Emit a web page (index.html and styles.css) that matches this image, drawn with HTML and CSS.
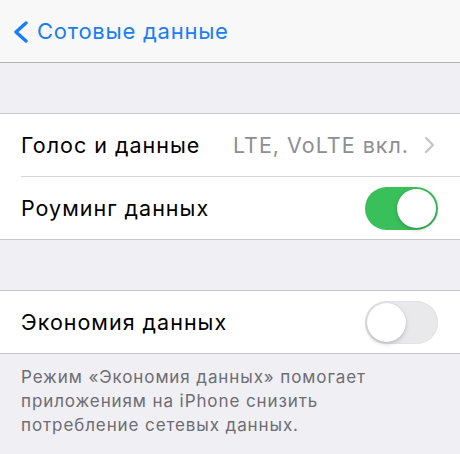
FILE: index.html
```html
<!DOCTYPE html>
<html lang="ru">
<head>
<meta charset="utf-8">
<link rel="stylesheet" href="styles.css">
</head>
<body>
<div class="screen">
  <header class="nav">
    <svg class="back-icon" width="18" height="22" viewBox="0 0 18 22"><path d="M14 2 L4 11 L14 20" fill="none" stroke="#1a7ef2" stroke-width="3.4" stroke-linecap="round" stroke-linejoin="round"/></svg>
    <span class="nav-title">Сотовые данные</span>
  </header>
  <div class="spacer"></div>
  <section class="group">
    <div class="row">
      <span class="label">Голос и данные</span>
      <span class="value">LTE, VoLTE вкл.</span>
      <svg class="chev" width="12" height="18" viewBox="0 0 12 18"><path d="M2 2 L9 9 L2 16" fill="none" stroke="#c4c4c8" stroke-width="2.2" stroke-linecap="round" stroke-linejoin="round"/></svg>
    </div>
    <div class="row">
      <span class="label">Роуминг данных</span>
      <span class="switch on"><span class="knob"></span></span>
    </div>
  </section>
  <div class="spacer"></div>
  <section class="group">
    <div class="row">
      <span class="label">Экономия данных</span>
      <span class="switch off"><span class="knob"></span></span>
    </div>
  </section>
  <p class="footer">Режим «Экономия данных» помогает приложениям на iPhone снизить потребление сетевых данных.</p>
</div>
</body>
</html>
```
FILE: styles.css
```css
* { box-sizing: border-box; }
html, body { margin: 0; padding: 0; }
body {
  background: #efeff4;
  font-family: Inter, "Liberation Sans", Arial, sans-serif;
  width: 460px;
  height: 454px;
  overflow: hidden;
}
.nav {
  height: 63px;
  background: #f8f8f8;
  border-bottom: 1px solid #b4b4b4;
  display: flex;
  align-items: center;
  padding-left: 12px;
}
.back-icon { margin-right: 7px; margin-top: 1px; }
.nav-title {
  color: #1a7ef2;
  font-size: 22px;
  letter-spacing: 0.75px;
}
.spacer { height: 50px; }
.group {
  background: #fff;
  border-top: 1px solid #c8c7cc;
  border-bottom: 1px solid #c8c7cc;
}
.row {
  height: 62px;
  display: flex;
  align-items: center;
  margin-left: 21px;
  padding-right: 22px;
  font-size: 21.5px;
  letter-spacing: 1px;
}
.row + .row { border-top: 1px solid #d6d6da; height: 63px; }
.label { color: #000; flex: 1; }
.value { color: #8e8e93; margin-right: 15px; }
.chev { margin-right: 2px; }
.switch {
  width: 73px;
  height: 43px;
  border-radius: 22px;
  position: relative;
  display: block;
}
.switch.on { background: #3ac05a; }
.switch.off { background: #e9e9eb; box-shadow: inset 0 0 0 1px #e3e3e5; }
.knob {
  position: absolute;
  top: 2px;
  width: 39px;
  height: 39px;
  border-radius: 50%;
  background: #fff;
  box-shadow: 0 2px 4px rgba(0,0,0,0.18), 0 0 1px rgba(0,0,0,0.2);
}
.switch.on .knob { right: 2px; }
.switch.off .knob { left: 2px; }
.footer {
  margin: 0;
  padding: 11px 69px 0 21px;
  color: #6d6d72;
  font-size: 17px;
  line-height: 24px;
  letter-spacing: 0.9px;
}
```
